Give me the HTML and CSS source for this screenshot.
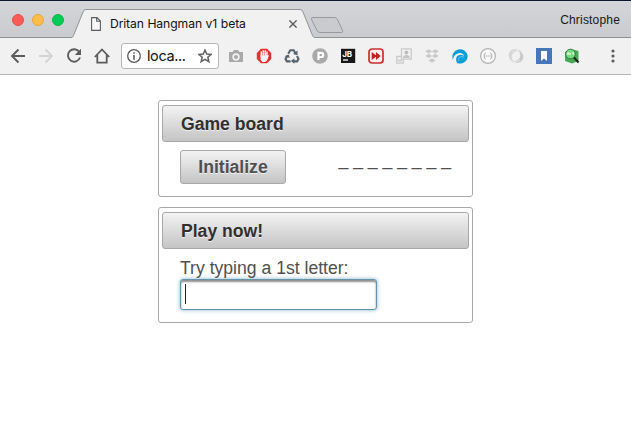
FILE: index.html
```html
<!DOCTYPE html>
<html lang="en">
<head>
<meta charset="utf-8">
<title>Dritan Hangman v1 beta</title>
<link rel="stylesheet" href="styles.css">
</head>
<body>
<header class="tabstrip">
  <div class="controls"><span class="dot red"></span><span class="dot yellow"></span><span class="dot green"></span></div>
  <div class="tab">
    <svg class="tab-shape" width="244" height="29" viewBox="0 0 244 29"><path d="M0 28.500Q1.800 28.500 2.500 26.500L12 3Q13 .5 15 .5H229Q231 .5 232 3L241.500 26.500Q242.300 28.500 244 28.500V29H0Z" fill="#f1f1f1"/><path d="M0 28.500Q1.800 28.500 2.500 26.500L12 3Q13 .5 15 .5H229Q231 .5 232 3L241.500 26.500Q242.300 28.500 244 28.500" fill="none" stroke="#919294"/></svg>
    <svg class="doc" width="10" height="14" viewBox="0 0 10 14"><path d="M.6.6H6L9.400 4V13.400H.6ZM5.700.8V4.300H9.200" fill="#f8f8f8" stroke="#5c5c5c" stroke-width="1.100"/></svg>
    <span class="tab-title">Dritan Hangman v1 beta</span>
    <svg class="close" width="8" height="8" viewBox="0 0 8 8"><path d="M.4.4 7.600 7.600M7.600.4.4 7.600" stroke="#5c5c5c" stroke-width="1.400"/></svg>
  </div>
  <svg class="newtab" width="35" height="18" viewBox="0 0 35 18"><path d="M3 .5H24.500Q26.500.5 27.500 2.500L32.500 13.500Q33.500 15.500 31.500 15.500H10Q8 15.500 7 13.500L1.500 2.500Q.7 .5 3 .5Z" fill="#c9cbce" stroke="#98999b"/></svg>
  <span class="profile">Christophe</span>
</header>
<nav class="toolbar">
  <div class="nav-icons">
    <svg width="16" height="16" viewBox="0 0 16 16"><path d="M15 8H2.500M8.500 1.500 2 8l6.500 6.500" fill="none" stroke="#5c5c5c" stroke-width="1.900"/></svg>
    <svg width="16" height="16" viewBox="0 0 16 16"><path d="M1 8h12.500M7.500 1.500 14 8l-6.500 6.500" fill="none" stroke="#d3d3d3" stroke-width="1.900"/></svg>
    <svg width="16" height="16" viewBox="0 0 16 16"><path d="M13.300 4A6.200 6.200 0 1 0 14 9.500" fill="none" stroke="#5c5c5c" stroke-width="1.900"/><path d="M15 .8V7H8.800Z" fill="#5c5c5c"/></svg>
    <svg width="16" height="16" viewBox="0 0 16 16"><path d="M.8 9 8 1.500 15.200 9M3.300 7v7.600h9.400V7" fill="none" stroke="#5c5c5c" stroke-width="1.800"/></svg>
  </div>
  <div class="address">
    <svg width="14" height="14" viewBox="0 0 14 14"><circle cx="7" cy="7" r="6.300" fill="none" stroke="#555" stroke-width="1.300"/><path d="M7 3.200v1.500M7 6v4.800" stroke="#555" stroke-width="1.500"/></svg>
    <span class="url">loca...</span>
    <svg width="14" height="14" viewBox="0 0 14 14"><path d="M7 1 8.700 5.100 13.200 5.400 9.800 8.300 10.900 12.700 7 10.300 3.100 12.700 4.200 8.300.8 5.400 5.300 5.100Z" fill="none" stroke="#636363" stroke-width="1.500"/></svg>
  </div>
  <div class="extensions">
    <svg viewBox="0 0 16 16"><path d="M1 4h3.500L6 2h4l1.500 2H15v10H1Z" fill="#a9a9a9"/><circle cx="8" cy="9" r="2.900" fill="none" stroke="#f3f3f3" stroke-width="1.600"/></svg>
    <svg viewBox="0 0 16 16"><path d="M5 .8h6L15.200 5v6L11 15.200H5L.8 11V5Z" fill="#ed2d2b"/><path d="M5.300 9V4M7.200 8V2.800M9.200 8V2.800M11 9V4" stroke="#fff" stroke-width="1.400" stroke-linecap="round"/><path d="M4.600 7.500h6.900L13 7.300 11 12.500 9 14H6.500L4.600 12Z" fill="#fff"/></svg>
    <svg viewBox="0 0 16 16"><path d="M4.200 5.800 6.300 2.300h3.400l1.700 3M13 8l1.500 2.900-1.400 2.500H9.500M6.600 13.400H2.900L1.500 11l2-3.200" fill="none" stroke="#56636e" stroke-width="2.100"/><path d="m9 6 4.500 1.200V2.600ZM10.300 10.300v5.500L6.900 13ZM.5 8.200 4.700 6.500l1.100 3.500Z" fill="#56636e"/></svg>
    <svg viewBox="0 0 16 16"><circle cx="8" cy="8" r="7.800" fill="#a9a9a9"/><path d="M6.500 12V4.800h2.600a2.100 2.100 0 0 1 0 4.200H6.500" fill="none" stroke="#fff" stroke-width="2.200"/></svg>
    <svg viewBox="0 0 16 16"><path d="M1 .8h14.200V15H1Z" fill="#171719"/><text class="jb" x="2.200" y="8.600">JB</text><path d="M3 12h5" stroke="#fff" stroke-width="1.300"/></svg>
    <svg viewBox="0 0 16 16"><rect x="1" y="1" width="14" height="14" rx="3" fill="#f7eeee" stroke="#ca302d" stroke-width="1.700"/><path d="M3.700 4 8 7.200V4l4.700 4L8 12V8.800L3.700 12Z" fill="#bd2422"/></svg>
    <svg viewBox="0 0 16 16"><path d="M5.500.8h9.700v10.400H5.500ZM5.500 8.500H.8v6.700h6.500v-4" fill="#f3f3f3" stroke="#c9c9c9" stroke-width="1.300"/><circle cx="10.400" cy="4.500" r="2" fill="#bebebe"/><path d="M7 10q0-3 3.400-3t3.400 3ZM2.300 13.500v-3l1.700 2 1.700-2v3" fill="#c4c4c4"/></svg>
    <svg viewBox="0 0 16 16"><path d="m4.700 1.200 3.500 2-3.500 2.200-3.500-2.200ZM11.300 1.200l3.500 2-3.500 2.200-3.500-2.200ZM4.700 5.800 8.200 8l-3.500 2-3.500-2ZM11.300 5.800l3.500 2.200-3.500 2L7.800 8ZM8 10.300l3.500 2.200L8 14.800l-3.500-2.300Z" fill="#c9c9c9"/></svg>
    <svg viewBox="0 0 16 16"><path d="M1 12A7.700 7.700 0 1 1 15.700 8 7.700 7.700 0 0 1 5.500 15.200C2.500 11 4.500 7 8.500 6.800c2-.1 3.200.7 4 2-.7-3-3.500-4.500-6.500-3.400C2.500 6.500 1 9 1 12Z" fill="#0d9dd5"/><path d="M7 13C5.500 9 9.500 7.500 12 9.500" fill="none" stroke="#8ed0ea" stroke-width=".8"/></svg>
    <svg viewBox="0 0 16 16"><circle cx="8" cy="8" r="7.400" fill="#f8f8f8" stroke="#b2b2b2" stroke-width="1.200"/><path d="M5.700 5Q4.400 5 4.600 7L3.700 8l.9 1Q4.400 11 5.700 11M10.300 5q1.300 0 1.100 2l.9 1-.9 1q.2 2-1.100 2" fill="none" stroke="#a6a6a6"/><path d="M5.800 8h4.800" stroke="#a6a6a6" stroke-width="1.200" stroke-dasharray="1.100 .7"/></svg>
    <svg viewBox="0 0 16 16"><path d="M8 1C3 1 0 4.500.8 8.200 1.300 11 3 12.500 5.500 13 2.500 9.500 3.200 5 8 3.500Z" fill="#d5d5d5"/><path d="M8 15c5 0 8-3.500 7.200-7.200C14.700 5 13 3.500 10.500 3c3 3.500 2.300 8-2.500 9.500Z" fill="#c9c9c9"/><path d="M4 4.500C7 1.300 12 1.500 14 4.500M2 11c2 3.500 7 3.800 10 .5" fill="none" stroke="#dedede" stroke-width="1.500"/></svg>
    <svg viewBox="0 0 16 16"><path d="M0 0h16v16H0Z" fill="#4877b9"/><path d="M5 3h6v10L8 10.500 5 13Z" fill="#fff"/></svg>
    <svg viewBox="0 0 16 16"><path d="m1 4 6-3 7.500 2v10L8 15.500 1 13Z" fill="#48a857"/><circle cx="6.500" cy="6" r="4.800" fill="#75dc7f" stroke="#337e42"/><path d="M3.500 6.700V5h1.300v1.700M6.200 5v1.700M8 5h1.500v1.700" fill="none" stroke="#e5ffdf" stroke-width="1.200"/><path d="m10 9.500 4.500 5" stroke="#222" stroke-width="2"/></svg>
  </div>
  <svg class="menu" width="4" height="14" viewBox="0 0 4 14"><g fill="#5c5c5c"><circle cx="2" cy="2" r="1.600"/><circle cx="2" cy="7" r="1.600"/><circle cx="2" cy="12" r="1.600"/></g></svg>
</nav>
<main class="page">
  <section class="panel board">
    <h2 class="panel-title">Game board</h2>
    <div class="board-row"><button class="init">Initialize</button><span class="word">_ _ _ _ _ _ _ _</span></div>
  </section>
  <section class="panel play">
    <h2 class="panel-title">Play now!</h2>
    <div class="entry"><label class="prompt" for="letter">Try typing a 1st letter:</label><div class="field" id="letter"><span class="caret"></span></div></div>
  </section>
</main>
</body>
</html>
```
FILE: styles.css
```css
* { box-sizing: border-box; }
body { margin: 0; height: 438px; background: #fff; overflow: hidden; font-family: "Liberation Sans", Arial, sans-serif; }
svg { display: block; flex: none; }
.tabstrip { display: flex; height: 38px; border-top: 1px solid #111a2c; border-bottom: 1px solid #919294; background: linear-gradient(#d3d5d8, #c9cbce); }
.controls { display: flex; gap: 8px; padding: 13px 0 0 12px; width: 71px; }
.dot { width: 12px; height: 12px; border-radius: 50%; }
.red { background: #fc5b57; border: 1px solid #e5504c; }
.yellow { background: #fdbc4b; border: 1px solid #e5a83c; }
.green { background: #02cb55; border: 1px solid #08b74b; }
.tab { position: relative; display: flex; align-items: center; width: 244px; height: 29px; margin-top: 8px; padding-left: 20px; }
.tab-shape { position: absolute; left: 0; top: 0; }
.doc, .tab-title, .close { position: relative; }
.tab-title { width: 171px; margin-left: 9px; font: 12.200px/28px Inter, sans-serif; letter-spacing: -.1px; word-spacing: .3px; font-kerning: none; color: #111; white-space: nowrap; }
.close { margin-left: 8px; }
.newtab { margin: 16px 0 0 -5px; }
.profile { margin: 12px 11px 0 auto; font: 12px/15px "Liberation Sans", sans-serif; letter-spacing: .18px; color: #171717; }
.toolbar { display: flex; align-items: center; height: 37px; padding-left: 10px; background: #f1f1f1; border-bottom: 1px solid #b5b5b5; }
.nav-icons { display: flex; gap: 12px; width: 111px; }
.address { display: flex; align-items: center; width: 98px; height: 26px; padding: 0 6px 0 5px; border: 1px solid #b5b5b5; border-radius: 3px; background: #fff; }
.url { width: 51px; padding-left: 6px; margin-right: 6px; font: 14.500px/24px Inter, sans-serif; letter-spacing: -.4px; color: #111; }
.extensions { display: flex; gap: 12px; margin-left: 9px; }
.extensions svg { width: 16px; height: 16px; }
.jb { font: bold 8px Inter, sans-serif; fill: #fff; }
.menu { margin-left: 31px; }
.page { display: flex; flex-direction: column; gap: 10px; width: 315px; margin: 25px 0 0 158px; font-size: 17.600px; color: #4f4f4f; }
.panel { padding: 4px 3px; border: 1px solid #a8a8a8; border-radius: 3px; }
.board { height: 97px; }
.play { height: 116px; }
.panel-title { height: 37px; margin: 0; padding-left: 18px; border: 1px solid #a8a8a8; border-radius: 3px; background: linear-gradient(#f3f3f3, #c4c4c4); font-size: 17.600px; line-height: 36px; color: #303030; text-shadow: 0 1px 0 rgba(255,255,255,.7); }
.board-row { display: flex; align-items: center; justify-content: space-between; padding: 8px 18px 0 18px; }
.init { width: 106px; height: 34px; padding: 0; border: 1px solid #a8a8a8; border-radius: 3px; background: linear-gradient(#f3f3f3, #c4c4c4); font: bold 17.600px/32px "Liberation Sans", sans-serif; color: #4f4f4f; text-shadow: 0 1px 0 rgba(255,255,255,.7); }
.word { line-height: 20px; white-space: nowrap; margin-top: -16px; }
.entry { padding: 8px 0 0 18px; }
.prompt { display: block; height: 22px; line-height: 22px; }
.field { width: 197px; height: 31px; padding: 4px; border: 1px solid #6594a8; border-radius: 3px; background: #fff; box-shadow: inset 0 2px 2px #8f8f8f, 0 0 4px #85b2cb; }
.caret { display: block; width: 1px; height: 20px; background: #222; }
```
